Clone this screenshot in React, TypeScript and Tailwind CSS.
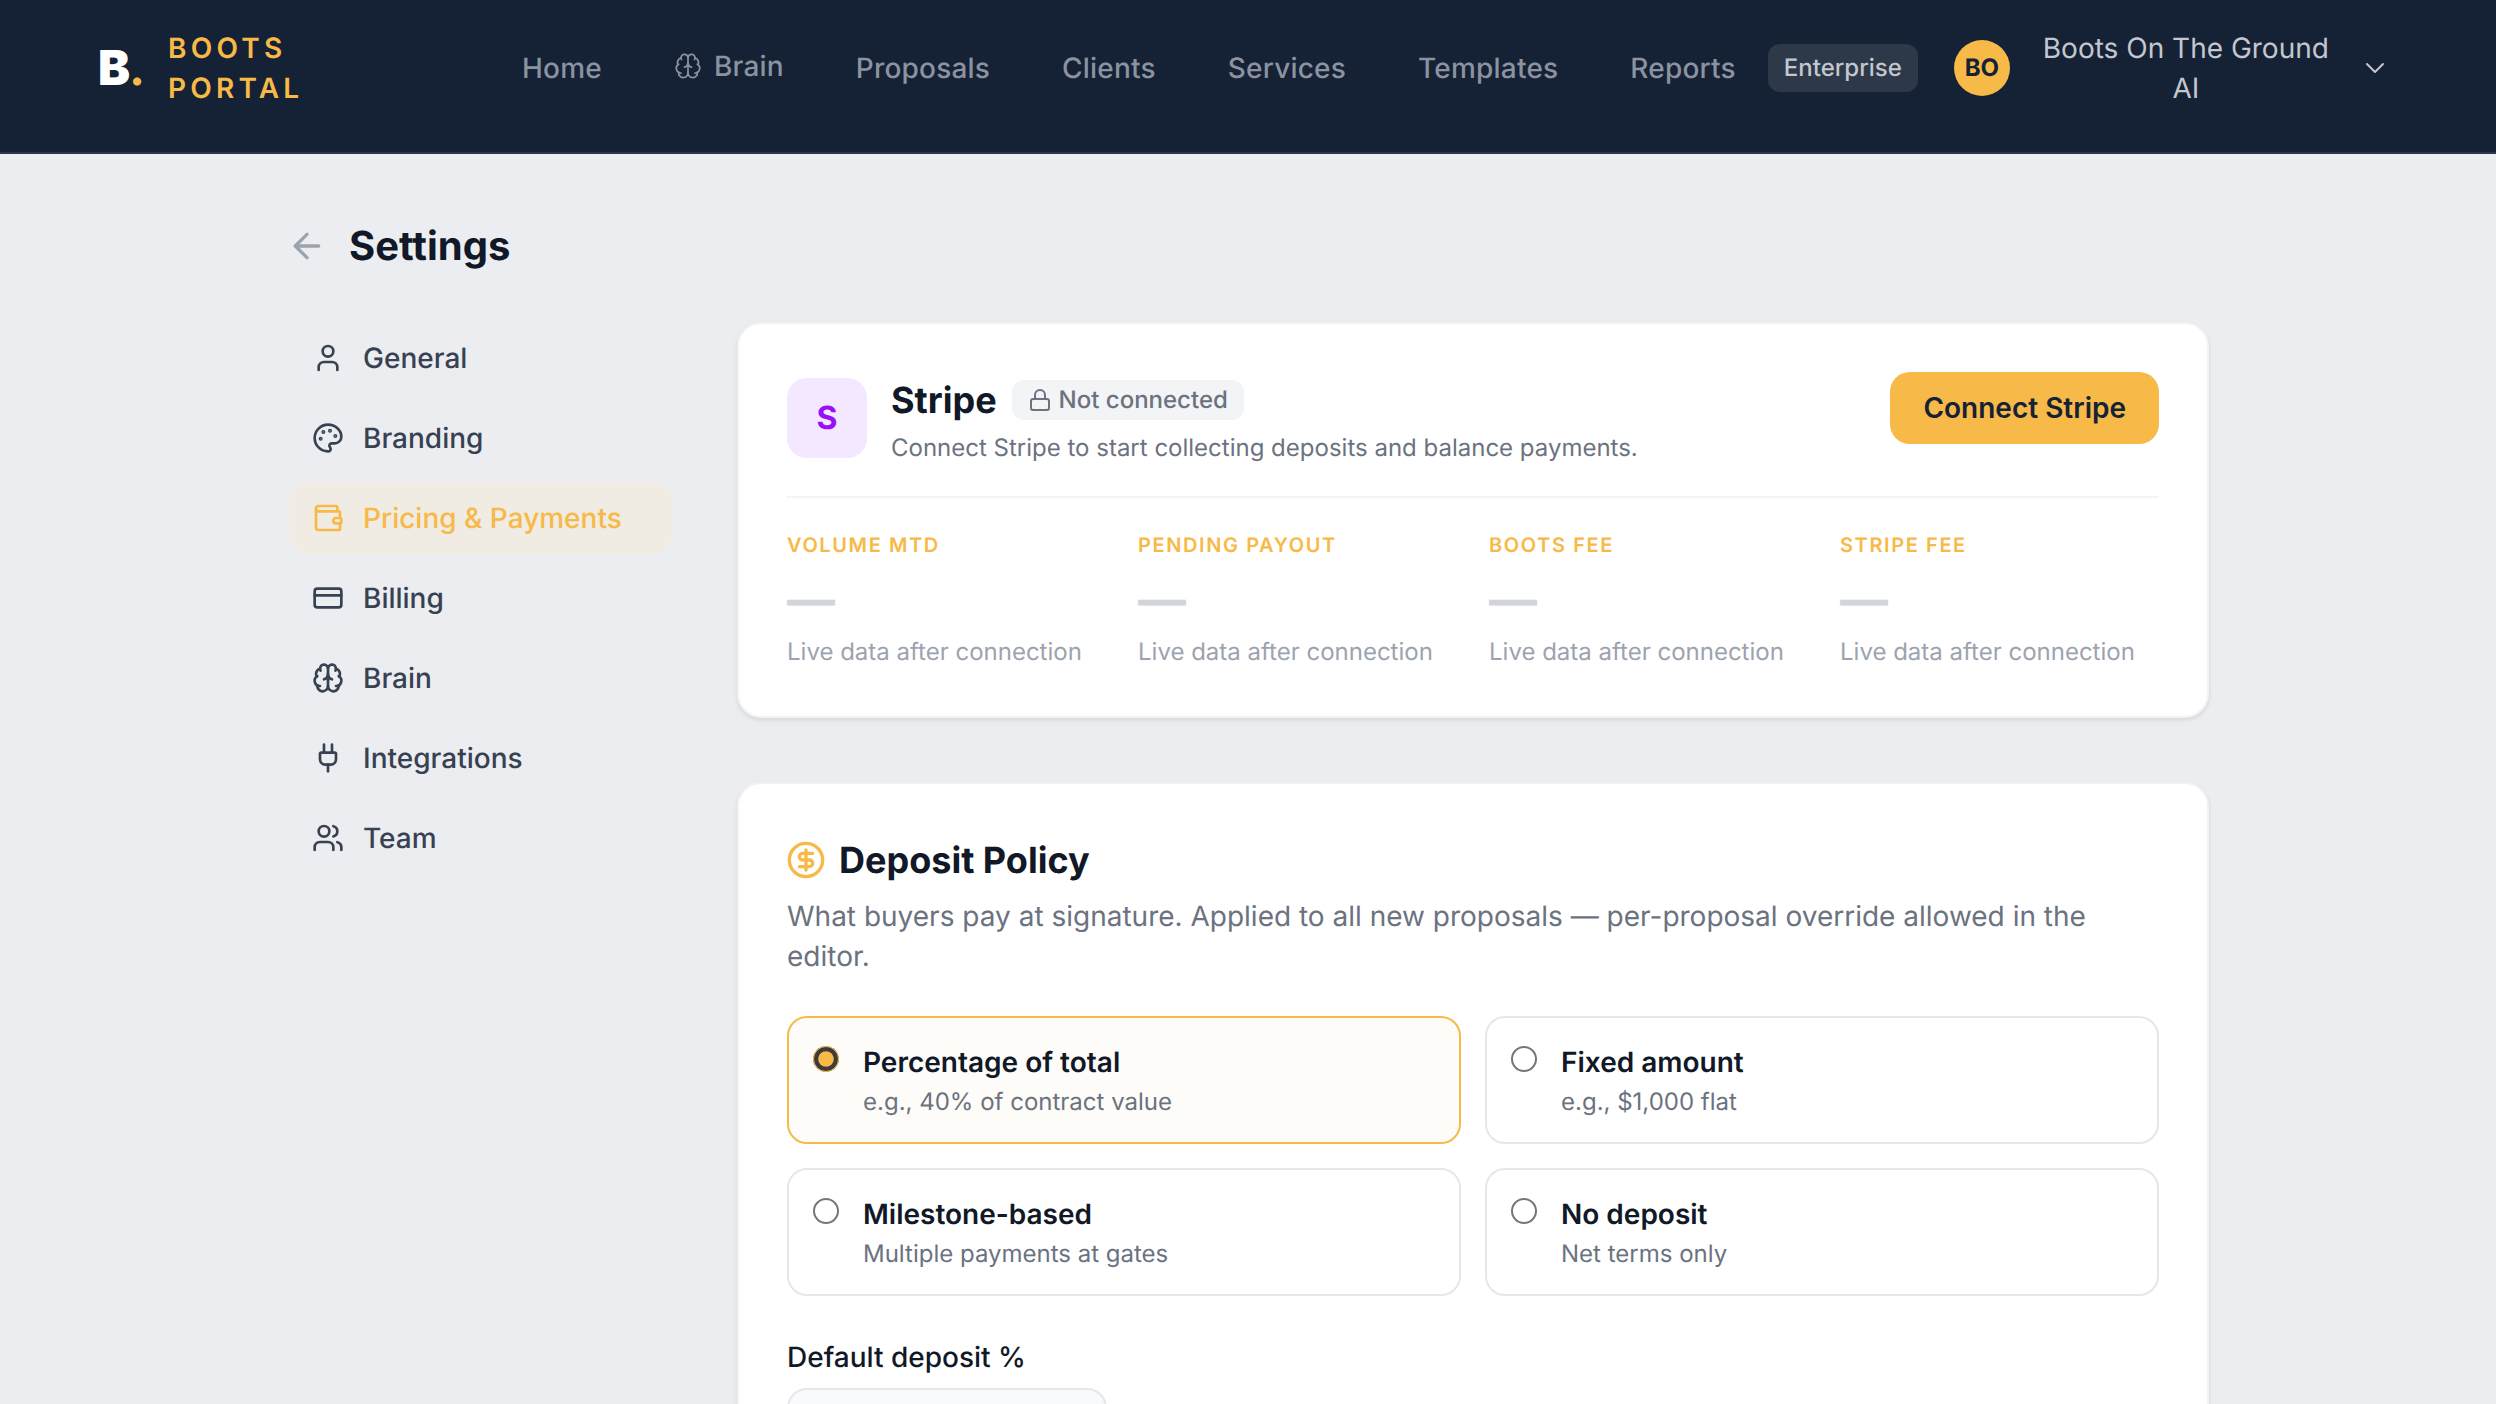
import { ArrowLeft, Brain, ChevronDown, CircleDollarSign, CreditCard, Lock, Palette, Plug, User, Users, Wallet } from "lucide-react";

const nav = [
  { label: "Home" },
  { label: "Brain", icon: true },
  { label: "Proposals" },
  { label: "Clients" },
  { label: "Services" },
  { label: "Templates" },
  { label: "Reports" },
];

const side = [
  { label: "General", Icon: User },
  { label: "Branding", Icon: Palette },
  { label: "Pricing & Payments", Icon: Wallet, active: true },
  { label: "Billing", Icon: CreditCard },
  { label: "Brain", Icon: Brain },
  { label: "Integrations", Icon: Plug },
  { label: "Team", Icon: Users },
];

const stats = ["Volume MTD", "Pending Payout", "Boots Fee", "Stripe Fee"];

const options = [
  { title: "Percentage of total", sub: "e.g., 40% of contract value", active: true },
  { title: "Fixed amount", sub: "e.g., $1,000 flat" },
  { title: "Milestone-based", sub: "Multiple payments at gates" },
  { title: "No deposit", sub: "Net terms only" },
];

export default function App() {
  return (
    <div className="h-[1404px] overflow-hidden bg-[#ebedf0] font-['Inter',sans-serif] [text-rendering:geometricPrecision]">
      <header className="flex h-[154px] items-center border-b-2 border-[#2b3648] bg-[#152135] pb-[16px] pl-[98px] pr-[94px]">
        <div className="flex w-[424px] shrink-0 items-center">
          <div className="flex items-baseline text-[48px] font-black leading-none text-white">
            B<span className="-ml-[1px] font-bold text-[#f7b947]">.</span>
          </div>
          <div className="ml-[23px] text-[28px] font-semibold uppercase leading-[40px] tracking-[4.2px] text-[#f7b947]">
            <div>Boots</div>
            <div>Portal</div>
          </div>
        </div>
        <nav className="flex items-center gap-[72px] text-[28px] font-medium tracking-[0.2px] text-[#8b92a0]">
          {nav.map((n) =>
            n.icon ? (
              <span key={n.label} className="-mt-[4px] flex items-center gap-[12px]">
                <Brain size={28} strokeWidth={1.5} />
                {n.label}
              </span>
            ) : (
              <span key={n.label}>{n.label}</span>
            )
          )}
        </nav>
        <span className="ml-[32px] flex h-[48px] items-center rounded-[12px] bg-[#2d3848] px-[16px] text-[24px] font-medium text-[#c3c7cf]">
          Enterprise
        </span>
        <span className="ml-[36px] flex h-[56px] w-[56px] shrink-0 items-center justify-center rounded-full bg-[#f7b947] text-[24px] font-bold text-[#152135]">
          BO
        </span>
        <span className="ml-[24px] w-[304px] text-center text-[28px] leading-[40px] text-[#c3c7cf]">
          Boots On The Ground AI
        </span>
        <ChevronDown size={32} strokeWidth={1.5} className="ml-[21px] text-[#c3c7cf]" />
      </header>

      <div className="flex px-[289px]">
        <aside className="w-[384px] shrink-0 pt-[61px]">
          <div className="flex h-[62px] items-center">
            <ArrowLeft size={40} strokeWidth={2} className="-ml-[2px] text-[#9ca3af]" />
            <h1 className="ml-[22px] text-[40px] font-bold text-[#111827]">Settings</h1>
          </div>
          <div className="mt-[45px] flex flex-col gap-[8px]">
            {side.map(({ label, Icon, active }) => (
              <div
                key={label}
                className={
                  active
                    ? "flex h-[72px] items-center gap-[19px] rounded-[20px] bg-[#f0ebe3] pl-[23px] pr-[24px] text-[28px] font-medium text-[#f7b947]"
                    : "flex h-[72px] items-center gap-[19px] rounded-[20px] pl-[23px] pr-[24px] text-[28px] font-medium text-[#374151]"
                }
              >
                <Icon size={32} strokeWidth={2} />
                {label}
              </div>
            ))}
          </div>
        </aside>

        <main className="ml-[64px] w-[1472px] shrink-0 pt-[168px]">
          <section className="rounded-[24px] border-2 border-[#f1f2f4] bg-white p-[48px] shadow-[0_2px_4px_rgba(0,0,0,0.1)]">
            <div className="flex items-start justify-between border-b-2 border-[#f3f4f6] pb-[28px]">
              <div className="flex items-start gap-[24px]">
                <div className="mt-[6px] flex h-[80px] w-[80px] items-center justify-center rounded-[20px] bg-[#f3e8ff] text-[32px] font-bold text-[#9810fa]">
                  S
                </div>
                <div className="mt-[4px]">
                  <div className="flex items-center gap-[15px]">
                    <span className="text-[36px] font-bold leading-[48px] text-[#111827]">Stripe</span>
                    <span className="flex h-[40px] items-center gap-[7px] rounded-[12px] bg-[#f3f4f6] px-[16px] text-[24px] font-medium text-[#6b7280]">
                      <Lock size={24} strokeWidth={2} />
                      Not connected
                    </span>
                  </div>
                  <p className="mt-[4px] text-[24px] leading-[40px] text-[#6b7280]">
                    Connect Stripe to start collecting deposits and balance payments.
                  </p>
                </div>
              </div>
              <button className="h-[72px] rounded-[20px] bg-[#f7b947] px-[33px] text-[28px] font-semibold text-[#152135]">
                Connect Stripe
              </button>
            </div>
            <div className="grid grid-cols-4 gap-[32px] pt-[31px]">
              {stats.map((s) => (
                <div key={s}>
                  <div className="text-[20px] font-semibold uppercase leading-[32px] tracking-[1.6px] text-[#f7b947]">{s}</div>
                  <div className="mt-[11px] text-[48px] font-bold leading-[56px] text-[#d1d5db]">—</div>
                  <div className="mt-[8px] text-[24px] leading-[32px] text-[#9ca3af]">Live data after connection</div>
                </div>
              ))}
            </div>
          </section>

          <section className="mt-[64px] rounded-[24px] border-2 border-[#f1f2f4] bg-white p-[48px] shadow-[0_2px_4px_rgba(0,0,0,0.1)]">
            <div className="flex h-[56px] items-center gap-[13px]">
              <CircleDollarSign size={40} strokeWidth={2} className="-ml-[1px] text-[#f7b947]" />
              <h2 className="text-[36px] font-bold text-[#111827]">Deposit Policy</h2>
            </div>
            <p className="mt-[8px] text-[28px] leading-[40px] text-[#6b7280]">
              What buyers pay at signature. Applied to all new proposals — per-proposal override allowed in the editor.
            </p>
            <div className="mt-[40px] grid grid-cols-2 gap-[24px]">
              {options.map((o) => (
                <label
                  key={o.title}
                  className={
                    o.active
                      ? "flex h-[128px] items-start gap-[24px] rounded-[20px] border-2 border-[#f7b947] bg-[#fefcf8] px-[24px] pt-[28px]"
                      : "flex h-[128px] items-start gap-[24px] rounded-[20px] border-2 border-[#e5e7eb] bg-white px-[24px] pt-[28px]"
                  }
                >
                  <input
                    type="radio"
                    name="policy"
                    defaultChecked={o.active}
                    className={
                      o.active
                        ? "m-0 h-[26px] w-[26px] shrink-0 accent-[#f7b947]"
                        : "m-0 h-[26px] w-[26px] shrink-0 appearance-none rounded-full border-2 border-[#767676] bg-white"
                    }
                  />
                  <span className="-mt-[4px] block">
                    <span className="block text-[28px] font-semibold leading-[40px] text-[#111827]">{o.title}</span>
                    <span className="block text-[24px] leading-[40px] text-[#6b7280]">{o.sub}</span>
                  </span>
                </label>
              ))}
            </div>
            <div className="mt-[41px] text-[28px] font-medium leading-[40px] text-[#111827]">Default deposit %</div>
            <div className="mt-[11px] h-[88px] w-[320px] rounded-[20px] border-2 border-[#e5e7eb] bg-[#f9fafb]" />
          </section>
        </main>
      </div>
    </div>
  );
}
